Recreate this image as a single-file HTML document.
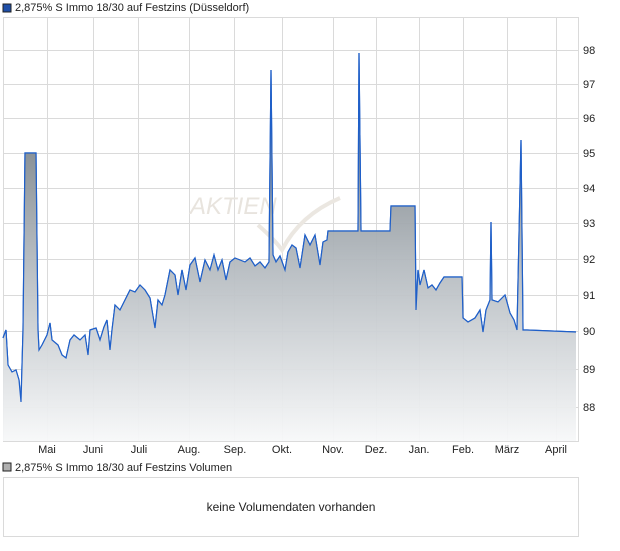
<!DOCTYPE html>
<html><head><meta charset="utf-8"><style>
body{margin:0;background:#fff;font-family:"Liberation Sans",sans-serif;}
</style></head><body>
<svg width="620" height="546" xmlns="http://www.w3.org/2000/svg" font-family="Liberation Sans, sans-serif">
<defs>
<linearGradient id="g" gradientUnits="userSpaceOnUse" x1="0" y1="140" x2="0" y2="441">
<stop offset="0" stop-color="#7f878d"/><stop offset="0.4" stop-color="#b3b9be"/><stop offset="1" stop-color="#f7f8f9"/>
</linearGradient>
</defs>
<rect x="3" y="4" width="8" height="8" fill="#1f4fa8" stroke="#222" stroke-width="1"/>
<text x="15" y="11" font-size="11" fill="#222">2,875% S Immo 18/30 auf Festzins (Düsseldorf)</text>
<g stroke="#dadada" stroke-width="1">
<rect x="3.5" y="17.5" width="575" height="424" fill="none"/>
<line x1="3" x2="578" y1="50.5" y2="50.5"/><line x1="3" x2="578" y1="84.5" y2="84.5"/><line x1="3" x2="578" y1="118.5" y2="118.5"/><line x1="3" x2="578" y1="153.5" y2="153.5"/><line x1="3" x2="578" y1="188.5" y2="188.5"/><line x1="3" x2="578" y1="223.5" y2="223.5"/><line x1="3" x2="578" y1="259.5" y2="259.5"/><line x1="3" x2="578" y1="295.5" y2="295.5"/><line x1="3" x2="578" y1="331.5" y2="331.5"/><line x1="3" x2="578" y1="369.5" y2="369.5"/><line x1="3" x2="578" y1="407.5" y2="407.5"/>
<line y1="17" y2="441" x1="47.5" x2="47.5"/><line y1="17" y2="441" x1="93.5" x2="93.5"/><line y1="17" y2="441" x1="138.5" x2="138.5"/><line y1="17" y2="441" x1="189.5" x2="189.5"/><line y1="17" y2="441" x1="234.5" x2="234.5"/><line y1="17" y2="441" x1="282.5" x2="282.5"/><line y1="17" y2="441" x1="333.5" x2="333.5"/><line y1="17" y2="441" x1="376.5" x2="376.5"/><line y1="17" y2="441" x1="419.5" x2="419.5"/><line y1="17" y2="441" x1="463.5" x2="463.5"/><line y1="17" y2="441" x1="507.5" x2="507.5"/><line y1="17" y2="441" x1="556.5" x2="556.5"/>
</g>
<text x="190" y="214" font-size="24" font-style="italic" fill="#e8e4de">AKTIEN</text>
<path d="M258 225 Q275 240 282 250 Q300 215 340 198" fill="none" stroke="#ebe7e1" stroke-width="4"/>
<path id="p" d="M3 338 L6 330 L8 365 L12 372 L16 370 L19 380 L21 402 L23 330 L25 153 L36 153 L38 330 L39 350 L42 345 L47 335 L50 323 L52 340 L58 345 L62 355 L66 358 L70 340 L74 335 L80 340 L85 335 L88 355 L90 330 L96 328 L100 340 L104 327 L107 320 L110 350 L112 330 L115 305 L120 310 L125 300 L130 290 L135 292 L140 285 L145 290 L150 298 L155 328 L158 300 L162 305 L165 295 L170 270 L175 275 L178 295 L182 270 L186 290 L190 265 L195 258 L200 282 L205 260 L210 270 L214 255 L218 270 L222 260 L226 280 L230 262 L235 258 L240 260 L245 262 L250 258 L255 266 L260 262 L265 268 L269 262 L271 70 L273 255 L276 262 L280 256 L285 270 L288 252 L292 245 L296 248 L300 268 L305 235 L310 245 L315 235 L320 265 L323 242 L327 240 L328 231 L358 231 L359 53 L361 231 L390 231 L391 206 L415 206 L416 310 L418 270 L420 285 L424 270 L428 288 L432 285 L436 290 L440 283 L444 277 L462 277 L463 318 L468 322 L475 318 L480 310 L483 332 L486 310 L490 300 L491 222 L492 300 L498 302 L505 295 L510 313 L514 320 L517 330 L521 140 L523 330 L527 330 L576 332" fill="none" stroke="#1f5fc8" stroke-width="1.2"/>
<path d="M3 338 L6 330 L8 365 L12 372 L16 370 L19 380 L21 402 L23 330 L25 153 L36 153 L38 330 L39 350 L42 345 L47 335 L50 323 L52 340 L58 345 L62 355 L66 358 L70 340 L74 335 L80 340 L85 335 L88 355 L90 330 L96 328 L100 340 L104 327 L107 320 L110 350 L112 330 L115 305 L120 310 L125 300 L130 290 L135 292 L140 285 L145 290 L150 298 L155 328 L158 300 L162 305 L165 295 L170 270 L175 275 L178 295 L182 270 L186 290 L190 265 L195 258 L200 282 L205 260 L210 270 L214 255 L218 270 L222 260 L226 280 L230 262 L235 258 L240 260 L245 262 L250 258 L255 266 L260 262 L265 268 L269 262 L271 70 L273 255 L276 262 L280 256 L285 270 L288 252 L292 245 L296 248 L300 268 L305 235 L310 245 L315 235 L320 265 L323 242 L327 240 L328 231 L358 231 L359 53 L361 231 L390 231 L391 206 L415 206 L416 310 L418 270 L420 285 L424 270 L428 288 L432 285 L436 290 L440 283 L444 277 L462 277 L463 318 L468 322 L475 318 L480 310 L483 332 L486 310 L490 300 L491 222 L492 300 L498 302 L505 295 L510 313 L514 320 L517 330 L521 140 L523 330 L527 330 L576 332 L576 441 L3 441 Z" fill="url(#g)" stroke="none" opacity="0.95"/>
<use href="#p"/>
<g font-size="11" fill="#222">
<text x="583" y="54">98</text><text x="583" y="88">97</text><text x="583" y="122">96</text><text x="583" y="157">95</text><text x="583" y="192">94</text><text x="583" y="227">93</text><text x="583" y="263">92</text><text x="583" y="299">91</text><text x="583" y="335">90</text><text x="583" y="373">89</text><text x="583" y="411">88</text>
</g>
<g font-size="11" fill="#222" text-anchor="middle">
<text x="47" y="453">Mai</text><text x="93" y="453">Juni</text><text x="139" y="453">Juli</text><text x="189" y="453">Aug.</text><text x="235" y="453">Sep.</text><text x="282" y="453">Okt.</text><text x="333" y="453">Nov.</text><text x="376" y="453">Dez.</text><text x="419" y="453">Jan.</text><text x="463" y="453">Feb.</text><text x="507" y="453">März</text><text x="556" y="453">April</text>
</g>
<rect x="3" y="463" width="8" height="8" fill="#b0b0b0" stroke="#222" stroke-width="1"/>
<text x="15" y="471" font-size="11" fill="#222">2,875% S Immo 18/30 auf Festzins Volumen</text>
<rect x="3.5" y="477.5" width="575" height="59" fill="none" stroke="#dadada"/>
<text x="291" y="511" font-size="12" fill="#222" text-anchor="middle">keine Volumendaten vorhanden</text>
</svg>
</body></html>
